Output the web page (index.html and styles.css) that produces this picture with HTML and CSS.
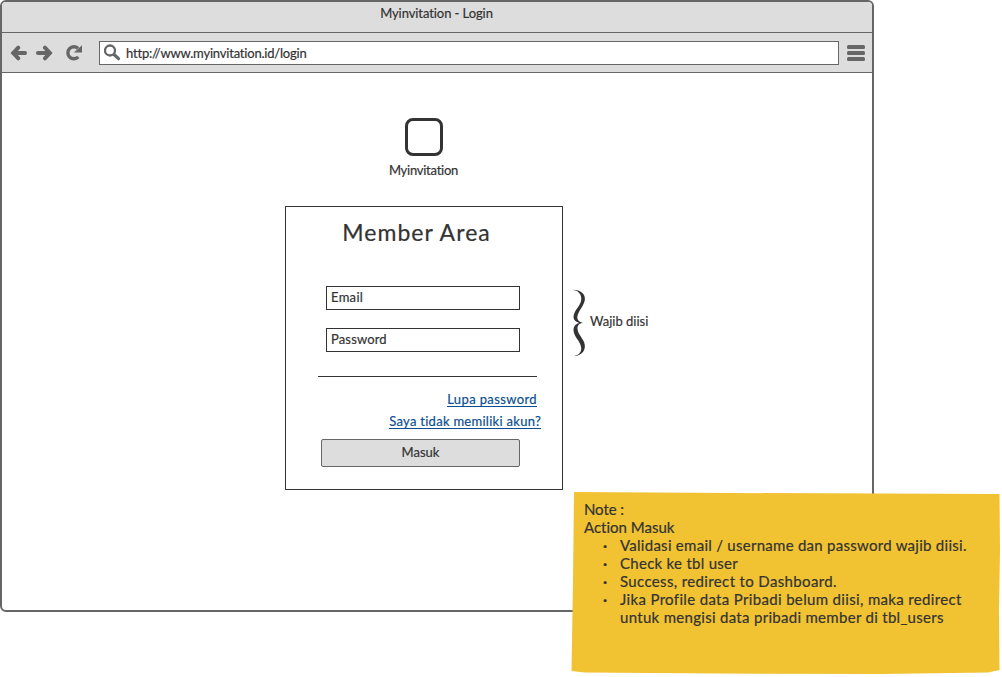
FILE: index.html
```
<!DOCTYPE html>
<html lang="id">
<head>
<meta charset="utf-8">
<title>Myinvitation - Login</title>
<link rel="stylesheet" href="styles.css">
</head>
<body>
<div class="canvas">
  <div class="window">
    <header class="titlebar"><span class="t-title">Myinvitation - Login</span></header>
    <nav class="toolbar">
      <svg class="nav-icons" width="76" height="20" viewBox="0 0 76 20" fill="none" stroke="#666" stroke-width="4">
        <path d="M4.500 10H16" stroke-linecap="round"/>
        <path d="M9.300 4.600L4.300 10L9.300 15.400" stroke-linecap="round"/>
        <path d="M29 10H40" stroke-linecap="round"/>
        <path d="M35.900 4.600L40.900 10L35.900 15.400" stroke-linecap="round"/>
        <path d="M69 5.400A6 6 0 1 0 69.300 13.800" stroke-width="3.400"/>
        <path d="M73 2.300V9.500H64.800L67.500 7.200Z" fill="#666" stroke="none"/>
      </svg>
      <div class="address">
        <svg class="search" width="18" height="18" viewBox="0 0 18 18" fill="none" stroke="#666">
          <circle cx="6" cy="6.500" r="5" stroke-width="2.300"/>
          <path d="M10 10.500L14.500 14.700" stroke-width="3.200" stroke-linecap="round"/>
        </svg>
        <span class="t-url">http://www.myinvitation.id/login</span>
      </div>
      <svg class="menu" width="18" height="16" viewBox="0 0 18 16" fill="#666">
        <rect width="18" height="4" rx="1.500"/><rect y="6" width="18" height="4" rx="1.500"/><rect y="12" width="18" height="4" rx="1.500"/>
      </svg>
    </nav>
    <main class="page">
      <div class="brand">
        <div class="logo"></div>
        <span class="t-brand">Myinvitation</span>
      </div>
      <div class="row">
        <form class="card">
          <h1 class="heading"><span class="t-heading">Member Area</span></h1>
          <div class="field"><span class="t-email">Email</span></div>
          <div class="field"><span class="t-password">Password</span></div>
          <hr class="rule">
          <a class="link forgot">Lupa password</a>
          <a class="link signup">Saya tidak memiliki akun?</a>
          <div class="button"><span class="t-button">Masuk</span></div>
        </form>
        <div class="required">
          <svg width="14" height="68" viewBox="0 0 14 68" fill="#333">
            <path d="M.5 .7C9 .7 13.700 5 12.800 11C12 17 6 22 5.300 28C5 31 7.500 33.300 11 33.800C7.500 34.400 5.200 36 5.500 40C6 46 12.200 50 12.800 56C13.500 63 8 67.300 .5 67.300C6 66.500 9.500 64 9.200 59C8.800 52 1.500 48 1.500 41C1.500 37 4 34.500 7.500 33.900C4 33.200 1.500 31 1.500 28C1.700 21 9.100 17 9.300 10C9.400 4.500 6 1.500 .5 .7Z"/>
          </svg>
          <span class="t-required">Wajib diisi</span>
        </div>
      </div>
    </main>
  </div>
  <aside class="note">
    <svg class="note-paper" width="431" height="185" viewBox="0 0 431 185">
      <path d="M4 2L160 3L429.500 4L430 60L429 120L429.500 180L418 182.500L310 184L150 183.500L15 182.500L1.500 181L3 90Z" fill="#f1c232"/>
    </svg>
    <div class="note-text">
      <p class="n1">Note :</p>
      <p class="n2">Action Masuk</p>
      <ul>
        <li class="n3">Validasi email / username dan password wajib diisi.</li>
        <li class="n4">Check ke tbl user</li>
        <li class="n5">Success, redirect to Dashboard.</li>
        <li><span class="n6">Jika Profile data Pribadi belum diisi, maka redirect</span><br><span class="n7">untuk mengisi data pribadi member di tbl_users</span></li>
      </ul>
    </div>
  </aside>
</div>
</body>
</html>
```
FILE: styles.css
```
* { box-sizing: border-box; }
body { margin: 0; background: #fff; color: #333; font: 13px/18px Lato, "Open Sans", sans-serif; font-variant-ligatures: none; -webkit-text-stroke: .2px; white-space: nowrap; }
.canvas { position: relative; width: 1002px; height: 677px; overflow: hidden; }
.window { display: flex; flex-direction: column; width: 874px; height: 612px; border: 2px solid #666; border-radius: 6px; overflow: hidden; background: #fff; }
.titlebar { height: 31px; padding: 2px 1px 0 0; background: #ddd; border-bottom: 1px solid #666; text-align: center; }
.t-title { letter-spacing: -.08px; }
.toolbar { display: flex; align-items: center; height: 40px; background: #ddd; border-bottom: 1px solid #666; padding-left: 7px; }
.address { display: flex; align-items: center; width: 740px; height: 24px; margin-left: 14px; border: 1px solid #666; background: #fff; padding-left: 4px; }
.t-url { margin-left: 4px; letter-spacing: -.2px; }
.menu { margin-left: 8px; }
.page { display: flex; flex-direction: column; padding: 45px 0 0 283px; }
.brand { display: flex; flex-direction: column; align-items: center; width: 277px; }
.logo { width: 38px; height: 38px; border: 3px solid #333; border-radius: 8px; }
.t-brand { margin-top: 5px; letter-spacing: -.25px; }
.row { display: flex; margin-top: 27px; }
.card { display: flex; flex-direction: column; width: 278px; height: 284px; border: 1px solid #333; }
.heading { margin: 10px 15px 0 0; height: 30px; font-size: 23px; line-height: 30px; font-weight: 400; text-align: center; }
.t-heading { letter-spacing: 1.05px; }
.field { width: 194px; height: 24px; margin: 39px 0 0 40px; border: 1px solid #333; padding: 1px 4px; }
.field + .field { margin-top: 18px; }
.t-email { letter-spacing: .3px; }
.t-password { letter-spacing: .15px; }
.rule { width: 219px; height: 1px; margin: 24px 0 0 32px; border: 0; background: #333; }
.link { align-self: flex-end; height: 15px; line-height: 15px; color: #0b4f91; border-bottom: 1px solid #0b4f91; }
.forgot { margin: 15px 25px 0 0; letter-spacing: .38px; }
.signup { margin: 7px 21px 0 0; letter-spacing: .28px; }
.button { width: 199px; height: 28px; margin: 10px 0 0 35px; border: 1px solid #666; border-radius: 2px; background: #ddd; line-height: 24px; text-align: center; }
.required { display: flex; height: 68px; margin: 83px 0 0 9px; align-items: center; }
.t-required { margin: -4px 0 0 4px; }
.note { position: absolute; left: 570px; top: 490px; width: 432px; height: 187px; }
.note-paper { position: absolute; left: 0; top: 0; }
.note-text { position: relative; padding: 10px 0 0 14px; font-size: 15px; line-height: 18px; }
.note-text p { margin: 0; }
.note-text ul { margin: 0; padding: 0 0 0 36px; list-style: none; }
.note-text li::before { content: "·"; float: left; width: 0; margin-left: -17px; margin-right: 17px; letter-spacing: 0; font-weight: 700; }
.n1 { letter-spacing: -.1px; }
.n3 { letter-spacing: .27px; }
.n4 { letter-spacing: .28px; }
.n5 { letter-spacing: .36px; }
.n6 { letter-spacing: .34px; }
.n7 { letter-spacing: .3px; }
```
